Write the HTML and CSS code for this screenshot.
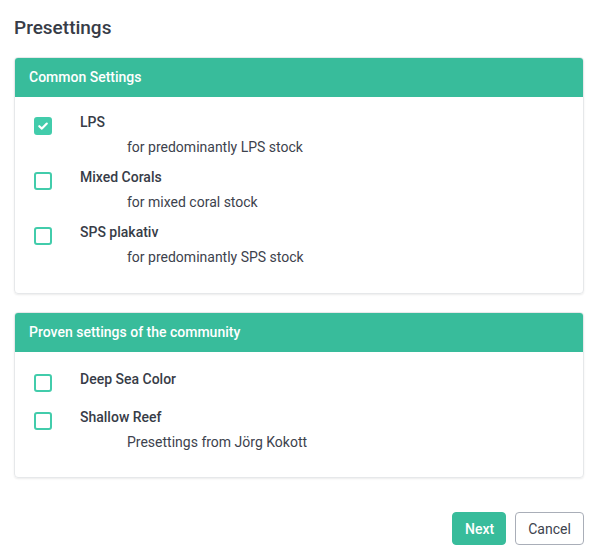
FILE: index.html
```html
<!DOCTYPE html>
<html>
<head>
<meta charset="utf-8">
<link rel="stylesheet" href="styles.css">
</head>
<body>
<div class="page">
  <h1 class="title">Presettings</h1>

  <section class="card">
    <div class="card-header">Common Settings</div>
    <div class="card-body">
      <div class="option">
        <span class="check checked">
          <svg viewBox="0 0 12 12" width="12" height="12"><path d="M2.3 6.2 L4.9 8.6 L9.8 3.6" fill="none" stroke="#fff" stroke-width="2.2" stroke-linecap="round" stroke-linejoin="round"/></svg>
        </span>
        <div class="text">
          <div class="label">LPS</div>
          <div class="desc">for predominantly LPS stock</div>
        </div>
      </div>
      <div class="option">
        <span class="check"></span>
        <div class="text">
          <div class="label">Mixed Corals</div>
          <div class="desc">for mixed coral stock</div>
        </div>
      </div>
      <div class="option">
        <span class="check"></span>
        <div class="text">
          <div class="label">SPS plakativ</div>
          <div class="desc">for predominantly SPS stock</div>
        </div>
      </div>
    </div>
  </section>

  <section class="card">
    <div class="card-header">Proven settings of the community</div>
    <div class="card-body card-body-2">
      <div class="option short">
        <span class="check"></span>
        <div class="text">
          <div class="label">Deep Sea Color</div>
        </div>
      </div>
      <div class="option">
        <span class="check"></span>
        <div class="text">
          <div class="label">Shallow Reef</div>
          <div class="desc">Presettings from Jörg Kokott</div>
        </div>
      </div>
    </div>
  </section>

  <div class="actions">
    <button class="btn btn-primary">Next</button>
    <button class="btn btn-outline">Cancel</button>
  </div>
</div>
</body>
</html>
```

FILE: styles.css
```css
* { box-sizing: border-box; }
html, body { margin: 0; padding: 0; background: #fff; }
body {
  font-family: Roboto, "Liberation Sans", Arial, sans-serif;
  color: #3d424d;
  font-size: 14px;
}
.page {
  padding: 16px 14px 0 14px;
}
.title {
  margin: 0 0 17px 0;
  font-size: 19px;
  line-height: 24px;
  font-weight: 500;
  color: #373c47;
}
.card {
  border: 1px solid #e6e8ea;
  border-radius: 4px;
  box-shadow: 0 1px 2px rgba(0,0,0,0.08);
  margin-bottom: 18px;
  overflow: hidden;
}
.card-header {
  background: #38bc9b;
  color: #fff;
  height: 40px;
  line-height: 40px;
  font-weight: 500;
  font-size: 14px;
  margin: -1px -1px 0 -1px;
  padding-left: 15px;
}
.card-body {
  padding: 15px 15px 26px 19px;
}
.card-body-2 {
  padding-top: 17px;
  padding-bottom: 25px;
}
.option {
  display: flex;
  align-items: flex-start;
  margin-bottom: 10px;
}
.option:last-child { margin-bottom: 0; }
.option.short { margin-bottom: 15px; }
.check {
  width: 18px;
  height: 18px;
  flex: 0 0 18px;
  border: 2px solid #42ccab;
  border-radius: 3px;
  margin-top: 5px;
  display: flex;
  align-items: center;
  justify-content: center;
}
.check.checked {
  background: #42ccab;
}
.text {
  margin-left: 28px;
}
.label {
  line-height: 20px;
  font-weight: 500;
  color: #373c47;
}
.desc {
  margin-top: 5px;
  margin-left: 47px;
  line-height: 20px;
  color: #3d424d;
}
.actions {
  display: flex;
  justify-content: flex-end;
  gap: 9px;
  margin-top: 34px;
}
.btn {
  font-family: Roboto, "Liberation Sans", Arial, sans-serif;
  font-size: 14px;
  height: 33px;
  border-radius: 4px;
  padding: 0 12px;
  cursor: pointer;
}
.btn-primary {
  background: #38bc9b;
  border: 1px solid #38bc9b;
  color: #fff;
  font-weight: 500;
  width: 54px;
}
.btn-outline {
  background: #fff;
  border: 1px solid #a9aeb8;
  color: #3d424d;
  width: 69px;
}
```
